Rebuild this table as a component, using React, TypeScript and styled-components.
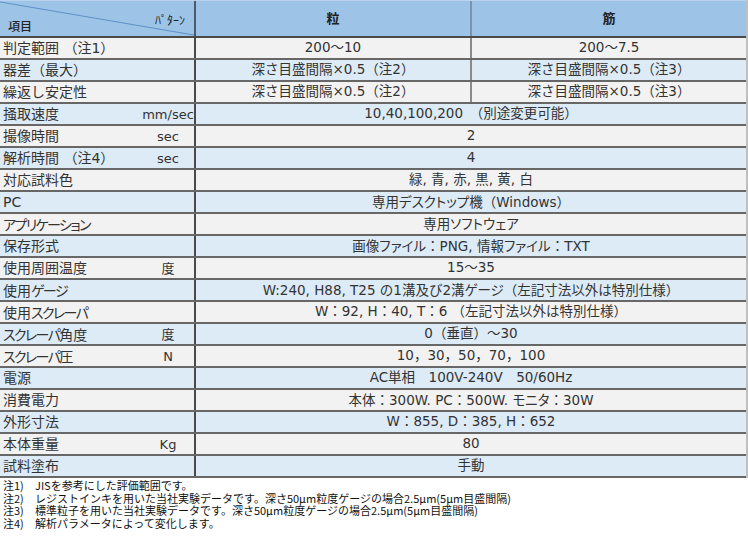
import React from "react";
import styled, { createGlobalStyle } from "styled-components";

const Global = createGlobalStyle`
  html, body { margin: 0; padding: 0; background: #ffffff; }
  body { font-family: "Noto Sans CJK JP", "Noto Sans", sans-serif; color: #333; }
  * { box-sizing: border-box; }
`;

const Page = styled.div`
  width: 748px;
  height: 540px;
  overflow: hidden;
`;

const Table = styled.div`
  width: 748px;
  border-right: 2px solid #bfbfbf;
`;

const HeaderRow = styled.div`
  display: grid;
  grid-template-columns: 196px 276px 1fr;
  height: 38px;
  background: #9dc3e6;
  border-top: 1px solid #b9d3ee;
  border-bottom: 2px solid #4a4a4a;
`;

const CornerCell = styled.div`
  position: relative;
  border-right: 2px solid #4d5966;
  color: #222;
`;

const Diagonal = styled.svg`
  position: absolute;
  left: 0;
  top: 0;
  width: 100%;
  height: 100%;
`;

const CornerItem = styled.span`
  position: absolute;
  left: 8px;
  bottom: 2px;
  font-size: 12px;
  font-weight: 500;
`;

const CornerPattern = styled.span`
  position: absolute;
  right: 9px;
  top: 10px;
  font-size: 12px;
`;

const HeadCell = styled.div<{ $split?: boolean }>`
  display: flex;
  align-items: center;
  justify-content: center;
  font-size: 13px;
  font-weight: 700;
  color: #222;
  border-right: ${(p) => (p.$split ? "2px solid #7d93aa" : "none")};
  padding-bottom: 2px;
`;

const Row = styled.div<{ $alt: boolean }>`
  display: grid;
  grid-template-columns: 196px 276px 1fr;
  height: 22px;
  background: ${(p) => (p.$alt ? "#ddebf7" : "#f2f2f2")};
  border-bottom: 2px solid #676767;
`;

const LabelCell = styled.div`
  display: flex;
  align-items: center;
  justify-content: space-between;
  padding-left: 3px;
  border-right: 2px solid #4a4a4a;
  font-family: "DejaVu Sans", "Noto Sans CJK JP", sans-serif;
  font-size: 14px;
  color: #333;
  white-space: nowrap;
  line-height: 1;
`;

const Unit = styled.span`
  width: 52px;
  text-align: center;
  font-size: 13px;
`;

const ValueCell = styled.div<{ $span?: boolean; $split?: boolean }>`
  grid-column: ${(p) => (p.$span ? "2 / 4" : "auto")};
  display: flex;
  align-items: center;
  justify-content: center;
  font-family: "DejaVu Sans", "Noto Sans CJK JP", sans-serif;
  font-size: 13.5px;
  color: #333;
  white-space: nowrap;
  line-height: 1;
  border-right: ${(p) => (p.$split ? "2px solid #8a8a8a" : "none")};
`;

const Kana = styled.span<{ $tight?: boolean }>`
  font-family: "Noto Sans CJK JP", sans-serif;
  font-feature-settings: "palt" 1;
  letter-spacing: ${(p) => (p.$tight ? "-1.6px" : "0")};
`;

const Notes = styled.div`
  padding-top: 1px;
  font-size: 11px;
  line-height: 12.7px;
  color: #111;
`;

const NoteLine = styled.div`
  display: grid;
  grid-template-columns: 32px 1fr;
  padding-left: 3px;
  white-space: nowrap;
`;

function Txt({ children, tight }: { children: string; tight?: boolean }) {
  const parts = children.split(/([\u30A0-\u30FF]+)/);
  return (
    <span>
      {parts.map((p, i) =>
        i % 2 === 1 ? (
          <Kana key={i} $tight={tight}>
            {p}
          </Kana>
        ) : (
          <React.Fragment key={i}>{p}</React.Fragment>
        )
      )}
    </span>
  );
}

type Spec = {
  label: string;
  unit?: string;
  values: string[];
};

const rows: Spec[] = [
  { label: "判定範囲 （注1）", values: ["200〜10", "200〜7.5"] },
  { label: "器差（最大）", values: ["深さ目盛間隔×0.5（注2）", "深さ目盛間隔×0.5（注3）"] },
  { label: "繰返し安定性", values: ["深さ目盛間隔×0.5（注2）", "深さ目盛間隔×0.5（注3）"] },
  { label: "掻取速度", unit: "mm/sec", values: ["10,40,100,200　（別途変更可能）"] },
  { label: "撮像時間", unit: "sec", values: ["2"] },
  { label: "解析時間 （注4）", unit: "sec", values: ["4"] },
  { label: "対応試料色", values: ["緑, 青, 赤, 黒, 黄, 白"] },
  { label: "PC", values: ["専用デスクトップ機（Windows）"] },
  { label: "アプリケーション", values: ["専用ソフトウェア"] },
  { label: "保存形式", values: ["画像ファイル：PNG, 情報ファイル：TXT"] },
  { label: "使用周囲温度", unit: "度", values: ["15〜35"] },
  { label: "使用ゲージ", values: ["W:240, H88, T25  の1溝及び2溝ゲージ（左記寸法以外は特別仕様）"] },
  { label: "使用スクレーパ", values: ["W：92, H：40, T：6 （左記寸法以外は特別仕様）"] },
  { label: "スクレーパ角度", unit: "度", values: ["0（垂直）〜30"] },
  { label: "スクレーパ圧", unit: "N", values: ["10，30，50，70，100"] },
  { label: "電源", values: ["AC単相　100V-240V　50/60Hz"] },
  { label: "消費電力", values: ["本体：300W. PC：500W. モニタ：30W"] },
  { label: "外形寸法", values: ["W：855, D：385, H：652"] },
  { label: "本体重量", unit: "Kg", values: ["80"] },
  { label: "試料塗布", values: ["手動"] },
];

const notes: [string, string][] = [
  ["注1)", "JISを参考にした評価範囲です。"],
  ["注2)", "レジストインキを用いた当社実験データです。深さ50μm粒度ゲージの場合2.5μm(5μm目盛間隔)"],
  ["注3)", "標準粒子を用いた当社実験データです。深さ50μm粒度ゲージの場合2.5μm(5μm目盛間隔)"],
  ["注4)", "解析パラメータによって変化します。"],
];

export default function App() {
  return (
    <Page>
      <Global />
      <Table>
        <HeaderRow>
          <CornerCell>
            <Diagonal viewBox="0 0 194 37" preserveAspectRatio="none">
              <line x1="0" y1="1" x2="194" y2="36" stroke="#5b8fc9" strokeWidth="1" />
            </Diagonal>
            <CornerPattern>ﾊﾟﾀｰﾝ</CornerPattern>
            <CornerItem>項目</CornerItem>
          </CornerCell>
          <HeadCell $split>粒</HeadCell>
          <HeadCell>筋</HeadCell>
        </HeaderRow>
        {rows.map((r, i) => (
          <Row key={r.label} $alt={i % 2 === 1}>
            <LabelCell>
              <Txt tight>{r.label}</Txt>
              {r.unit && <Unit>{r.unit}</Unit>}
            </LabelCell>
            {r.values.length === 2 ? (
              <>
                <ValueCell $split>
                  <Txt>{r.values[0]}</Txt>
                </ValueCell>
                <ValueCell>
                  <Txt>{r.values[1]}</Txt>
                </ValueCell>
              </>
            ) : (
              <ValueCell $span>
                <Txt>{r.values[0]}</Txt>
              </ValueCell>
            )}
          </Row>
        ))}
      </Table>
      <Notes>
        {notes.map(([k, t]) => (
          <NoteLine key={k}>
            <span>{k}</span>
            <span>{t}</span>
          </NoteLine>
        ))}
      </Notes>
    </Page>
  );
}
